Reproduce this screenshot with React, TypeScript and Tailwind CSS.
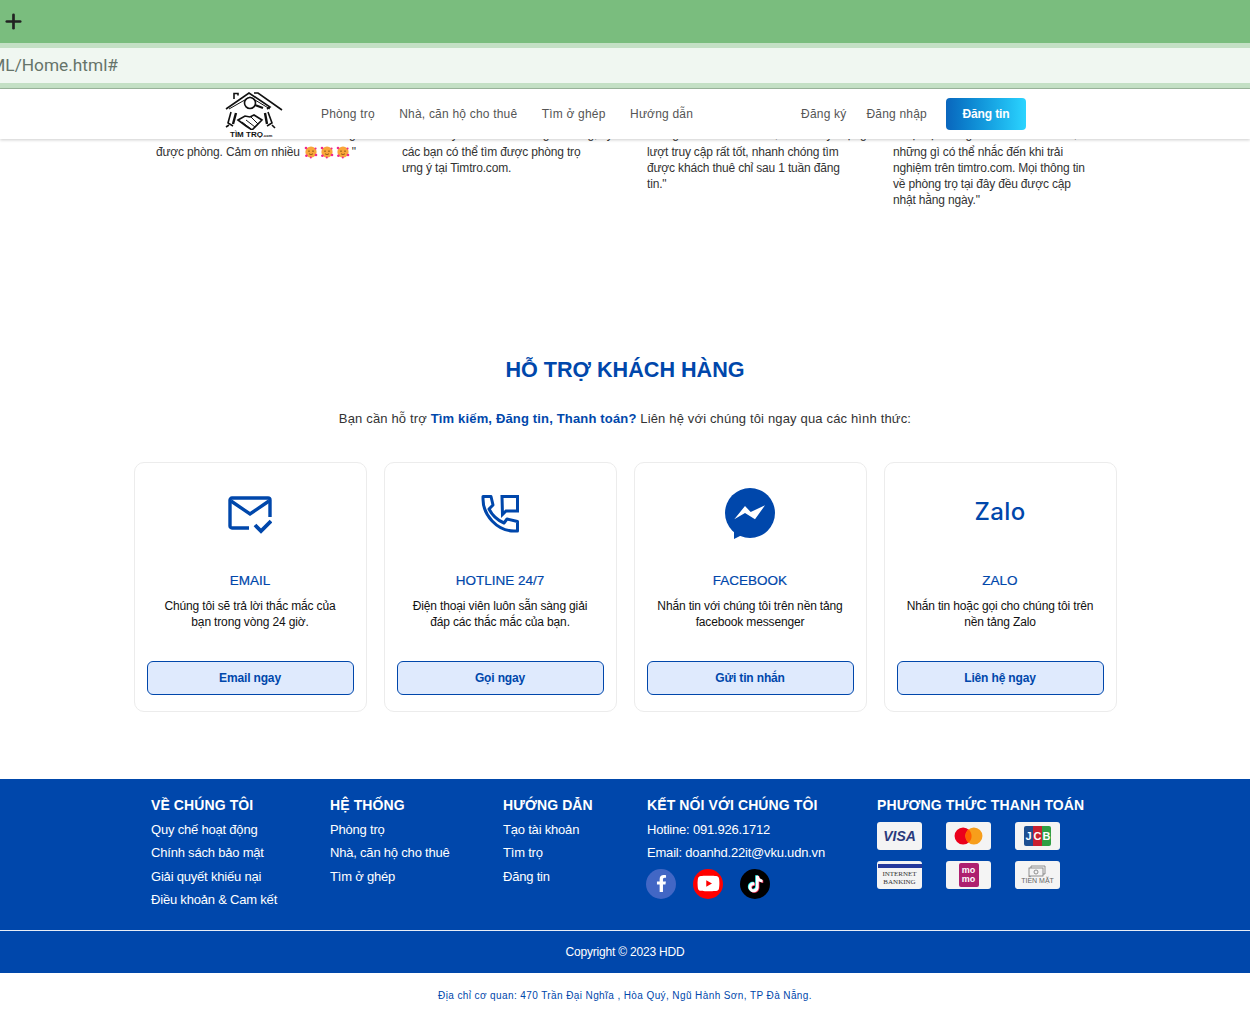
import { FaFacebookF, FaYoutube } from "react-icons/fa";
import { Plus } from "lucide-react";

const navLinks = ["Phòng trọ", "Nhà, căn hộ cho thuê", "Tìm ở ghép", "Hướng dẫn"];

const reviews = [
  { lines: ["Nhờ timtro.com mà mình nhanh chóng tìm", "được phòng. Cảm ơn nhiều"], emoji: true, cls: "w-[246px]" },
  { lines: ["“Mình rất yên tâm với những tin đăng, hy", "các bạn có thể tìm được phòng trọ", "ưng ý tại Timtro.com."], cls: "w-[245px]" },
  { lines: ["“Đăng tin trên timtro.com, mình thấy lượng", "lượt truy cập rất tốt, nhanh chóng tìm", "được khách thuê chỉ sau 1 tuần đăng", "tin.\""], cls: "w-[246px]" },
  { lines: ["“Thật sự không đủ lời để nói hết về,", "những gì có thể nhắc đến khi trải", "nghiệm trên timtro.com. Mọi thông tin", "về phòng trọ tại đây đều được cập", "nhật hằng ngày.\""], cls: "w-[200px]" },
];

const Heart = () => (
  <svg viewBox="0 0 14 14" className="w-[14px] h-[14px] inline-block align-[-3px] mr-[2px]">
    <circle cx="7" cy="7" r="5.600" fill="#f9a63a" />
    <path d="M4 6.400q1-1 2 0M8 6.400q1-1 2 0M5 8.800q2 1.600 4 0" fill="none" stroke="#7a4a10" strokeWidth="0.800" />
    <circle cx="2" cy="3" r="1.300" fill="#f0288c" />
    <circle cx="12" cy="10" r="1.300" fill="#f0288c" />
    <circle cx="2.400" cy="10.800" r="1.300" fill="#f0288c" />
    <circle cx="11.600" cy="3.400" r="1" fill="#f0288c" />
    <circle cx="6.800" cy="12.600" r="1" fill="#f0288c" />
  </svg>
);

const MailIcon = () => (
  <svg viewBox="0 0 44 38" className="w-[44px] h-[38px]" fill="none" stroke="#0047ab" strokeWidth="3.400">
    <path d="M21 32H4a2 2 0 0 1-2-2V4a2 2 0 0 1 2-2h36a2 2 0 0 1 2 2v17" />
    <path d="M3 5l19 13L41 5" />
    <path d="M27 29l6 6 10-10" strokeWidth="3.800" />
  </svg>
);

const PhoneIcon = () => (
  <svg viewBox="0 0 38 38" className="w-[38px] h-[38px] -mt-[3px]" fill="none" stroke="#0047ab" strokeWidth="3">
    <path d="M2 1.500H10L12 10 8 14C11 20 16 25 23 28L26 24 36.500 26.500V36H33C16 36 2 20 2 4Z" strokeLinejoin="round" />
    <path d="M21 1.500H36.500V16H25L21.500 19.500Z" />
  </svg>
);

const MessengerIcon = () => (
  <svg viewBox="0 0 50 52" className="w-[50px] h-[52px] -mt-[3px]">
    <circle cx="25" cy="25" r="25" fill="#0047ab" />
    <path d="M9 40V51L19 46z" fill="#0047ab" />
    <path d="M9.300 31.300L20 18l5.700 6L40 17.300 30 31.300 20 25z" fill="#fff" />
  </svg>
);

const supports = [
  { title: "EMAIL", lines: ["Chúng tôi sẽ trả lời thắc mắc của", "bạn trong vòng 24 giờ."], cta: "Email ngay", icon: <MailIcon /> },
  { title: "HOTLINE 24/7", lines: ["Điện thoại viên luôn sẵn sàng giải", "đáp các thắc mắc của bạn."], cta: "Gọi ngay", icon: <PhoneIcon /> },
  { title: "FACEBOOK", lines: ["Nhắn tin với chúng tôi trên nền tảng", "facebook messenger"], cta: "Gửi tin nhắn", icon: <MessengerIcon /> },
  {
    title: "ZALO",
    lines: ["Nhắn tin hoặc gọi cho chúng tôi trên", "nền tảng Zalo"],
    cta: "Liên hệ ngay",
    icon: <span className="mb-[6px] font-['Inter',sans-serif] font-medium text-[24px] leading-none tracking-[0.4px] text-[#0047ab]">Zalo</span>,
  },
];

const footerCols = [
  { title: "VỀ CHÚNG TÔI", w: "w-[179px]", links: ["Quy chế hoạt động", "Chính sách bảo mật", "Giải quyết khiếu nại", "Điều khoản & Cam kết"] },
  { title: "HỆ THỐNG", w: "w-[173px]", links: ["Phòng trọ", "Nhà, căn hộ cho thuê", "Tìm ở ghép"] },
  { title: "HƯỚNG DẪN", w: "w-[144px]", links: ["Tạo tài khoản", "Tìm trọ", "Đăng tin"] },
];

const Logo = () => (
  <div className="w-[58px] h-[50px] flex flex-col">
    <svg viewBox="0 0 58 40" className="w-[58px] h-[40px] shrink-0 mt-[1px]" fill="none" stroke="#111" strokeWidth="1.600">
      <path d="M1 19L24 3l21 14-3 2" />
      <path d="M29 3h4l24 17" />
      <path d="M9 9V3.500h4v2" />
      <path d="M4 19l21-12 20 12" strokeWidth="1" />
      <circle cx="25" cy="13" r="5.500" />
      <path d="M30 15l8 3" strokeWidth="2.200" />
      <g transform="translate(-3 0)">
        <path d="M9 22l-3 11 5 3M46 22l4 11-5 3" />
        <path d="M14 23l-3 11M43 23l2 11" strokeWidth="2.400" />
        <path d="M16 30l7-4 5 1 4-2 8 5-10 10-6-4z" />
        <path d="M20 32l9 7M24 30l9 7M29 27l7 7" strokeWidth="1" />
        <path d="M7 35l-3 2M50 35l3 3" />
      </g>
    </svg>
    <span className="ml-[5px] font-bold text-[8px] leading-[9px] text-[#111] whitespace-nowrap">
      TÌM TRỌ<span className="text-[4px]">.com</span>
    </span>
  </div>
);

const TikTok = () => {
  const d = "M13 3h3c.3 2.500 1.800 4 4.200 4.300v3c-1.600 0-3-.5-4.200-1.300v6.500c0 3.300-2.700 5.500-5.500 5.500S5 18.500 5 15.500c0-3.300 2.800-5.700 6.300-5.300v3.200c-1.700-.4-3.200.6-3.200 2.100 0 1.300 1 2.300 2.300 2.300 1.500 0 2.600-1 2.600-2.700z";
  return (
    <svg viewBox="0 0 24 24" className="w-[22px] h-[22px]">
      <path d={d} fill="#25f4ee" transform="translate(-0.8 -0.6)" />
      <path d={d} fill="#fe2c55" transform="translate(0.8 0.6)" />
      <path d={d} fill="#fff" />
    </svg>
  );
};

const PayCard = ({ children }: { children: React.ReactNode }) => (
  <div className="w-[45px] h-[28px] bg-[#f4f4f4] rounded-[3px] flex items-center justify-center overflow-hidden">{children}</div>
);

const App = () => {
  return (
    <div className="w-[1250px] h-[1017px] overflow-hidden bg-white font-['Liberation_Sans',Arial,sans-serif]">
      {/* browser chrome */}
      <div className="h-[43px] bg-[#7abd7e] flex items-center pl-[2px]">
        <Plus size={23} strokeWidth={2.800} className="text-[#222]" />
      </div>
      <div className="h-[46px] bg-[#c4e0c5] pt-[5px] border-b border-[#9db89e]">
        <div className="h-[35px] bg-[#f0f7f1] flex items-center">
          <div className="w-[118px] flex justify-end overflow-hidden whitespace-nowrap font-['Roboto',sans-serif] text-[17.300px] text-[#66746a]">
            ML/Home.html#
          </div>
        </div>
      </div>

      {/* nav */}
      <nav className="relative z-10 h-[50px] bg-white shadow-[0_1px_3px_rgba(0,0,0,0.2)] flex items-center pl-[225px] pr-[224px] text-[12px] text-[#555]">
        <Logo />
        <div className="flex gap-[24.400px] ml-[38px] tracking-[0.2px]">
          {navLinks.map((link) => (
            <a key={link} className="whitespace-nowrap">{link}</a>
          ))}
        </div>
        <div className="ml-auto flex items-center tracking-[0.2px]">
          <a>Đăng ký</a>
          <a className="ml-[20px]">Đăng nhập</a>
          <button type="button" className="ml-[19px] w-[80px] h-[32px] rounded-[4px] bg-gradient-to-r from-[#0a66bd] to-[#2bd4ff] text-white font-bold tracking-[-0.1px]">
            Đăng tin
          </button>
        </div>
      </nav>

      {/* testimonials, first line runs under the nav */}
      <section className="-mt-[11px] pl-[156px] flex text-[12px] leading-[16px] tracking-[-0.17px] text-[#333]">
        {reviews.map((review, index) => (
          <div key={index} className={review.cls}>
            {review.lines.map((line, lineIndex) => (
              <div key={line} className={lineIndex === 0 ? "h-[16px] leading-[13px] whitespace-nowrap" : "whitespace-nowrap"}>
                {line}
                {review.emoji && line.startsWith("được") && (
                  <span className="ml-[4px]"><Heart /><Heart /><Heart />"</span>
                )}
              </div>
            ))}
          </div>
        ))}
      </section>

      {/* support */}
      <section className="mt-[148px]">
        <h2 className="text-center text-[21.600px] leading-[28px] font-bold text-[#0047ab]">HỖ TRỢ KHÁCH HÀNG</h2>
        <p className="mt-[25px] text-center text-[13px] leading-[20px] tracking-[0.16px] text-[#333]">
          Bạn cần hỗ trợ <b className="text-[#0047ab]">Tìm kiếm, Đăng tin, Thanh toán?</b> Liên hệ với chúng tôi ngay qua các hình thức:
        </p>
        <div className="mt-[33px] mx-auto w-[983px] grid grid-cols-4 gap-[17px]">
          {supports.map((item) => (
            <div key={item.title} className="h-[250px] bg-white border border-[#ececec] rounded-[10px] px-[12px] flex flex-col items-center">
              <div className="h-[98px] pt-[6px] flex items-center justify-center shrink-0">{item.icon}</div>
              <h3 className="mt-[11px] text-[13.500px] leading-[18px] [-webkit-text-stroke:0.2px_#0047ab] text-[#0047ab]">{item.title}</h3>
              <p className="mt-[8px] text-center text-[12px] leading-[16px] tracking-[-0.15px] text-[#111]">
                {item.lines.map((line) => (
                  <span key={line} className="block whitespace-nowrap">{line}</span>
                ))}
              </p>
              <button type="button" className="mt-auto mb-[16px] w-full h-[34px] rounded-[6px] border border-[#0047ab] bg-[#dfeafd] text-[12px] tracking-[-0.15px] font-bold text-[#0047ab]">
                {item.cta}
              </button>
            </div>
          ))}
        </div>
      </section>

      {/* footer */}
      <footer className="mt-[67px] h-[194px] bg-[#0047ab] text-white flex flex-col">
        <div className="h-[152px] pl-[151px] pt-[18px] flex border-b border-[#e8eef8]">
          {footerCols.map((col) => (
            <div key={col.title} className={col.w}>
              <h4 className="text-[14px] leading-[16px] font-bold tracking-[0.1px]">{col.title}</h4>
              <ul className="mt-[5px] text-[13px] tracking-[-0.2px]">
                {col.links.map((link) => (
                  <li key={link} className="h-[23.400px] leading-[23px] whitespace-nowrap">{link}</li>
                ))}
              </ul>
            </div>
          ))}
          <div className="w-[230px]">
            <h4 className="text-[14px] leading-[16px] font-bold tracking-[0.1px]">KẾT NỐI VỚI CHÚNG TÔI</h4>
            <ul className="mt-[5px] text-[13px] tracking-[-0.2px]">
              <li className="h-[23.400px] leading-[23px]">Hotline: 091.926.1712</li>
              <li className="h-[23.400px] leading-[23px]">Email: doanhd.22it@vku.udn.vn</li>
            </ul>
            <div className="mt-[4px] -ml-[1px] flex gap-[17px]">
              <div className="w-[30px] h-[30px] rounded-full bg-[#4267c5] flex items-center justify-center"><FaFacebookF size={17} /></div>
              <div className="w-[30px] h-[30px] rounded-full bg-[#f00] flex items-center justify-center"><FaYoutube size={23} /></div>
              <div className="w-[30px] h-[30px] rounded-full bg-black flex items-center justify-center"><TikTok /></div>
            </div>
          </div>
          <div>
            <h4 className="text-[14px] leading-[16px] font-bold tracking-[0.13px]">PHƯƠNG THỨC THANH TOÁN</h4>
            <div className="mt-[9px] grid grid-cols-[45px_45px_45px] gap-x-[24px] gap-y-[11px]">
              <PayCard><span className="font-bold italic text-[14px] text-[#2a3a7c]">VISA</span></PayCard>
              <PayCard>
                <svg viewBox="0 0 32 20" className="w-[29px] h-[18px]">
                  <circle cx="10" cy="10" r="9.500" fill="#eb001b" />
                  <circle cx="22" cy="10" r="9.500" fill="#f79e1b" />
                  <path d="M16 2.700a9.500 9.500 0 0 1 0 14.600a9.500 9.500 0 0 1 0-14.600z" fill="#ff5f00" />
                </svg>
              </PayCard>
              <PayCard>
                <div className="w-[27px] h-[20px] flex rounded-[2px] overflow-hidden text-[11px] font-bold leading-[20px] text-white text-center">
                  <span className="flex-1 bg-[#1d4f91]">J</span>
                  <span className="flex-1 bg-[#c8202f]">C</span>
                  <span className="flex-1 bg-[#2f9e44]">B</span>
                </div>
              </PayCard>
              <PayCard>
                <div className="w-full h-full flex flex-col items-center pt-[3px]">
                  <div className="w-[44px] h-[4px] bg-[#24389c] shrink-0" />
                  <span className="font-['Liberation_Serif',serif] text-[7px] leading-[7.500px] mt-[3px] text-[#333]">INTERNET</span>
                  <span className="font-['Liberation_Serif',serif] text-[7px] leading-[7.500px] text-[#333]">BANKING</span>
                </div>
              </PayCard>
              <PayCard>
                <div className="w-[20px] h-[24px] bg-[#ae2070] rounded-[2px] flex flex-col items-center justify-center text-white font-bold text-[9px] leading-[9px]">
                  <span>mo</span>
                  <span>mo</span>
                </div>
              </PayCard>
              <PayCard>
                <div className="flex flex-col items-center">
                  <svg viewBox="0 0 18 12" className="w-[18px] h-[12px]" fill="none" stroke="#777" strokeWidth="0.800">
                    <rect x="1" y="3" width="14" height="8" />
                    <path d="M3 3V1h14v8h-2" />
                    <circle cx="8" cy="7" r="2" />
                  </svg>
                  <span className="text-[7px] leading-[8px] text-[#666]">TIỀN MẶT</span>
                </div>
              </PayCard>
            </div>
          </div>
        </div>
        <div className="flex-1 flex items-center justify-center text-[12px] tracking-[-0.2px]">Copyright © 2023 HDD</div>
      </footer>
      <p className="mt-[16px] text-center text-[10px] leading-[14px] tracking-[0.4px] text-[#0047ab]">
        Địa chỉ cơ quan: 470 Trần Đại Nghĩa , Hòa Quý, Ngũ Hành Sơn, TP Đà Nẵng.
      </p>
    </div>
  );
};

export default App;
